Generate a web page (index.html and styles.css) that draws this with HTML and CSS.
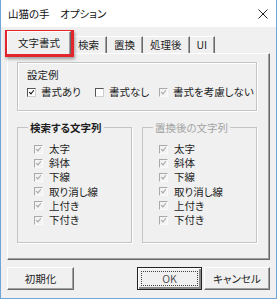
FILE: index.html
```html
<!DOCTYPE html>
<html>

	<head>
		<meta charset="UTF-8">
		<title>山猫の手　オプション</title>
		<link rel="stylesheet" href="styles.css">
	</head>

	<body>
		<div class="window">
			<div class="titlebar">
				<span class="title">山猫の手　オプション</span>
				<svg class="close" width="10" height="10" viewBox="0 0 10 10">
					<path d="M0.5 0.5L9.5 9.5M9.5 0.5L0.5 9.5" stroke="#222" stroke-width="1" fill="none" />
				</svg>
			</div>
			<div class="client">
				<div class="tabs">
					<div class="tab active">文字書式</div>
					<div class="tab">検索</div>
					<div class="tab">置換</div>
					<div class="tab">処理後</div>
					<div class="tab">UI</div>
				</div>
				<div class="panel">
					<div class="sample">
						<div class="sample-title">設定例</div>
						<div class="sample-row">
							<label class="check"><span class="box on"></span>書式あり</label>
							<label class="check"><span class="box"></span>書式なし</label>
							<label class="check"><span class="box on dim"></span>書式を考慮しない</label>
						</div>
					</div>
					<div class="groups">
						<fieldset class="group">
							<legend>検索する文字列</legend>
							<div class="items">
								<label class="check"><span class="box on dim"></span>太字</label>
								<label class="check"><span class="box on dim"></span>斜体</label>
								<label class="check"><span class="box on dim"></span>下線</label>
								<label class="check"><span class="box on dim"></span>取り消し線</label>
								<label class="check"><span class="box on dim"></span>上付き</label>
								<label class="check"><span class="box on dim"></span>下付き</label>
							</div>
						</fieldset>
						<fieldset class="group off">
							<legend>置換後の文字列</legend>
							<div class="items">
								<label class="check"><span class="box on dim"></span>太字</label>
								<label class="check"><span class="box on dim"></span>斜体</label>
								<label class="check"><span class="box on dim"></span>下線</label>
								<label class="check"><span class="box on dim"></span>取り消し線</label>
								<label class="check"><span class="box on dim"></span>上付き</label>
								<label class="check"><span class="box on dim"></span>下付き</label>
							</div>
						</fieldset>
					</div>
				</div>
				<div class="buttons">
					<div class="btn reset">初期化</div>
					<div class="btn ok">OK</div>
					<div class="btn cancel">キャンセル</div>
				</div>
				<!-- 赤枠の注釈 -->
				<div class="mark"></div>
			</div>
		</div>
	</body>

</html>
```

FILE: styles.css
```css
body {
	margin: 0;
	background-color: #fff;
	font-family: "Noto Sans CJK JP", "Noto Sans", sans-serif;
	font-feature-settings: "palt";
	font-size: 10.5px;
	color: #1e1e1e;
}

.window {
	display: flex;
	flex-direction: column;
	box-sizing: border-box;
	width: 277px;
	height: 299px;
	border: 1px solid #6fa5d7;
	border-top: 0;
	background-color: #f0f0f0;
}

.titlebar {
	display: flex;
	flex: none;
	align-items: center;
	justify-content: space-between;
	height: 27px;
	padding: 0 8px 0 7px;
	background-color: #fff;
}

.title {
	font-size: 10.5px;
	color: #111;
}

.client {
	position: relative;
	display: flex;
	flex-direction: column;
	flex: 1;
	padding: 4px 6px 0 6px;
}

/*タブ*/
.tabs {
	display: flex;
	align-items: flex-end;
	height: 22px;
}

.tab {
	box-sizing: border-box;
	height: 17px;
	padding: 0 7px;
	line-height: 16px;
	border-top: 1px solid #fff;
	border-right: 1px solid #696969;
	box-shadow: inset -1px 0 #a0a0a0;
}

.tab.active {
	position: relative;
	z-index: 1;
	display: flex;
	align-items: center;
	height: 23px;
	margin-bottom: -1px;
	padding: 0 10px;
	border-left: 1px solid #fff;
	background-color: #f0f0f0;
}

.panel {
	box-sizing: border-box;
	height: 207px;
	padding: 8px 12px 0 9px;
	border-top: 1px solid #fff;
	border-left: 1px solid #fff;
	border-right: 1px solid #696969;
	border-bottom: 1px solid #696969;
	box-shadow: inset -1px -1px #a0a0a0;
}

/*設定例*/
.sample {
	box-sizing: border-box;
	height: 49px;
	padding: 5px 0 0 9px;
	border: 1px solid #c4c4c4;
	box-shadow: inset 1px 1px #fff, 1px 1px #fff;
}

.sample-title {
	line-height: 14px;
}

.sample-row {
	display: flex;
	margin-top: 3px;
}

.sample-row .check:nth-child(1) {
	width: 68px;
}

.sample-row .check:nth-child(2) {
	width: 64px;
}

.sample-row .box {
	margin-right: 5px;
}

/*チェックボックス*/
.check {
	display: flex;
	align-items: center;
	height: 14px;
	line-height: 14px;
	white-space: nowrap;
}

.box {
	position: relative;
	box-sizing: border-box;
	width: 9px;
	height: 9px;
	margin-right: 6px;
	border-top: 1px solid #555;
	border-left: 1px solid #555;
	border-right: 1px solid #cfcfcf;
	border-bottom: 1px solid #cfcfcf;
	background-color: #fff;
}

.box.on::after {
	content: '';
	position: absolute;
	left: 2px;
	top: 0;
	width: 2px;
	height: 4px;
	border: solid #111;
	border-width: 0 1.5px 1.5px 0;
	transform: rotate(40deg);
}

.box.dim {
	border-top-color: #a9a9a9;
	border-left-color: #a9a9a9;
	border-right-color: #fafafa;
	border-bottom-color: #fafafa;
	background-color: #f3f3f3;
}

.box.dim::after {
	border-color: #a4a4a4;
}

/*グループ*/
.groups {
	display: flex;
	gap: 10px;
	margin-top: 10px;
}

.group {
	box-sizing: border-box;
	width: 115px;
	height: 122px;
	min-width: 0;
	margin: 0;
	padding: 0;
	border: 1px solid #c4c4c4;
	box-shadow: 1px 1px #fff;
}

.group legend {
	margin-left: 10px;
	padding: 0 2px;
	line-height: 13px;
	font-weight: bold;
}

.group.off legend {
	font-weight: normal;
	color: #a3a3a3;
}

.items {
	padding: 8px 0 0 16px;
}

.items .check {
	height: 14.2px;
}

/*ボタン*/
.buttons {
	display: flex;
	gap: 2px;
	margin-top: 7px;
}

.btn {
	position: relative;
	box-sizing: border-box;
	height: 23px;
	line-height: 21px;
	text-align: center;
	border-top: 1px solid #fff;
	border-left: 1px solid #fff;
	border-right: 1px solid #696969;
	border-bottom: 1px solid #696969;
	box-shadow: inset -1px -1px #a0a0a0;
}

.reset {
	width: 67px;
	margin-right: auto;
}

.ok {
	width: 65px;
	border: 1px solid #222;
	box-shadow: inset 1px 1px #fff, inset -2px -2px #8a8a8a;
	color: #555;
}

.ok::after {
	content: '';
	position: absolute;
	top: 3px;
	left: 3px;
	right: 3px;
	bottom: 3px;
	border: 1px dotted #444;
}

.cancel {
	width: 66px;
}

/*赤枠*/
.mark {
	position: absolute;
	left: 4px;
	top: 3px;
	width: 69px;
	height: 27px;
	box-sizing: border-box;
	border: 3px solid #e3262b;
	box-shadow: 1px 2px 3px rgba(0, 0, 0, 0.35);
}
```
